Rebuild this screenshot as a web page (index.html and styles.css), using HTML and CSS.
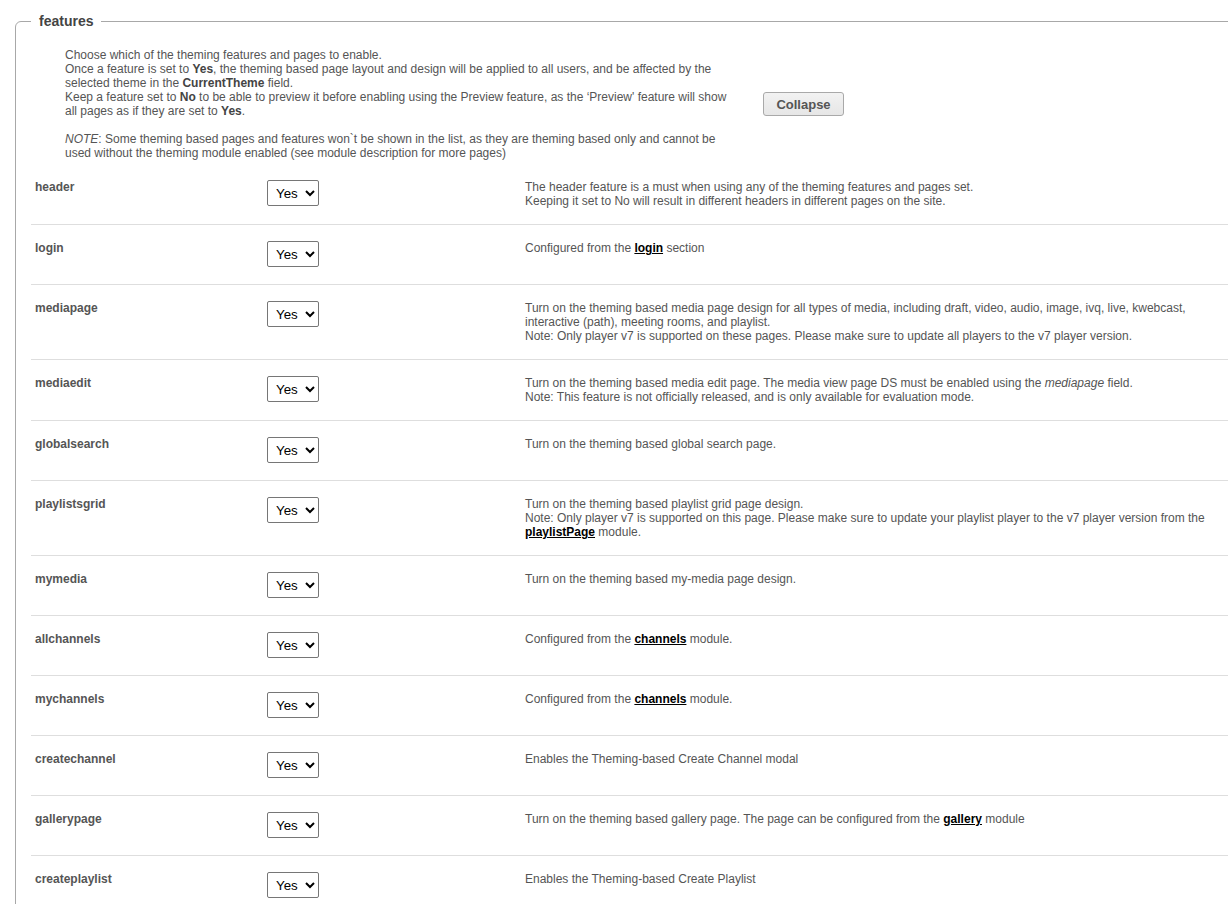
FILE: index.html
```html
<!DOCTYPE html>
<html>
<head>
<meta charset="utf-8">
<link rel="stylesheet" href="styles.css">
</head>
<body>
<div class="page">
<fieldset class="features">
  <legend class="legend">features</legend>
  <div class="intro">
    <div class="intro-text">
      Choose which of the theming features and pages to enable.<br>
      Once a feature is set to <b>Yes</b>, the theming based page layout and design will be applied to all users, and be affected by the selected theme in the <b>CurrentTheme</b> field.<br>
      Keep a feature set to <b>No</b> to be able to preview it before enabling using the Preview feature, as the ‘Preview' feature will show all pages as if they are set to <b>Yes</b>.<br>
      <br>
      <i>NOTE</i>: Some theming based pages and features won`t be shown in the list, as they are theming based only and cannot be used without the theming module enabled (see module description for more pages)
    </div>
    <button class="collapse" type="button">Collapse</button>
  </div>

  <div class="rows">
    <div class="row">
      <div class="label">header</div>
      <div class="control"><select class="sel"><option>Yes</option><option>No</option></select></div>
      <div class="desc">The header feature is a must when using any of the theming features and pages set.<br>Keeping it set to No will result in different headers in different pages on the site.</div>
    </div>
    <div class="row">
      <div class="label">login</div>
      <div class="control"><select class="sel"><option>Yes</option><option>No</option></select></div>
      <div class="desc">Configured from the <a class="lnk" href="#">login</a> section</div>
    </div>
    <div class="row">
      <div class="label">mediapage</div>
      <div class="control"><select class="sel"><option>Yes</option><option>No</option></select></div>
      <div class="desc">Turn on the theming based media page design for all types of media, including draft, video, audio, image, ivq, live, kwebcast, interactive (path), meeting rooms, and playlist.<br>Note: Only player v7 is supported on these pages. Please make sure to update all players to the v7 player version.</div>
    </div>
    <div class="row">
      <div class="label">mediaedit</div>
      <div class="control"><select class="sel"><option>Yes</option><option>No</option></select></div>
      <div class="desc">Turn on the theming based media edit page. The media view page DS must be enabled using the <i>mediapage</i> field.<br>Note: This feature is not officially released, and is only available for evaluation mode.</div>
    </div>
    <div class="row">
      <div class="label">globalsearch</div>
      <div class="control"><select class="sel"><option>Yes</option><option>No</option></select></div>
      <div class="desc">Turn on the theming based global search page.</div>
    </div>
    <div class="row">
      <div class="label">playlistsgrid</div>
      <div class="control"><select class="sel"><option>Yes</option><option>No</option></select></div>
      <div class="desc">Turn on the theming based playlist grid page design.<br>Note: Only player v7 is supported on this page. Please make sure to update your playlist player to the v7 player version from the <a class="lnk" href="#">playlistPage</a> module.</div>
    </div>
    <div class="row">
      <div class="label">mymedia</div>
      <div class="control"><select class="sel"><option>Yes</option><option>No</option></select></div>
      <div class="desc">Turn on the theming based my-media page design.</div>
    </div>
    <div class="row">
      <div class="label">allchannels</div>
      <div class="control"><select class="sel"><option>Yes</option><option>No</option></select></div>
      <div class="desc">Configured from the <a class="lnk" href="#">channels</a> module.</div>
    </div>
    <div class="row">
      <div class="label">mychannels</div>
      <div class="control"><select class="sel"><option>Yes</option><option>No</option></select></div>
      <div class="desc">Configured from the <a class="lnk" href="#">channels</a> module.</div>
    </div>
    <div class="row">
      <div class="label">createchannel</div>
      <div class="control"><select class="sel"><option>Yes</option><option>No</option></select></div>
      <div class="desc">Enables the Theming-based Create Channel modal</div>
    </div>
    <div class="row">
      <div class="label">gallerypage</div>
      <div class="control"><select class="sel"><option>Yes</option><option>No</option></select></div>
      <div class="desc">Turn on the theming based gallery page. The page can be configured from the <a class="lnk" href="#">gallery</a> module</div>
    </div>
    <div class="row">
      <div class="label">createplaylist</div>
      <div class="control"><select class="sel"><option>Yes</option><option>No</option></select></div>
      <div class="desc">Enables the Theming-based Create Playlist</div>
    </div>
    <div class="row">
      <div class="label">editplaylist</div>
      <div class="control"><select class="sel"><option>Yes</option><option>No</option></select></div>
      <div class="desc">Enables the Theming-based Edit Playlist</div>
    </div>
  </div>
</fieldset>
</div>
</body>
</html>
```

FILE: styles.css
```css
html, body {
  margin: 0;
  padding: 0;
  background: #fff;
  overflow: hidden;
}

body {
  font-family: "Liberation Sans", Arial, sans-serif;
  font-size: 12px;
  line-height: 14px;
  color: #555;
}

.page {
  padding: 13px 0 0 15px;
  width: 1228px;
}

.features {
  margin: 0;
  border: 1px solid #a8a8a8;
  border-radius: 6px 0 0 0;
  padding: 19px 0 0 15px;
  min-width: 0;
}

.legend {
  padding: 0 8px;
  font-size: 14px;
  line-height: 16px;
  font-weight: bold;
  color: #444;
}

.intro {
  display: flex;
  align-items: center;
  padding-left: 34px;
  margin-bottom: 4px;
}

.intro-text {
  width: 665px;
}

.intro-text b {
  color: #444;
}

.collapse {
  margin-left: 33px;
  width: 81px;
  height: 24px;
  padding: 0;
  font-family: "Liberation Sans", Arial, sans-serif;
  font-size: 13px;
  font-weight: bold;
  color: #555;
  background: linear-gradient(#f2f2f2, #e6e6e6);
  border: 1px solid #a9a9a9;
  border-radius: 3px;
}

.rows {
  display: flex;
  flex-direction: column;
}

.row {
  display: grid;
  grid-template-columns: 232px 258px 1fr;
  padding: 16px 0;
  border-bottom: 1px solid #dedede;
}

.row:last-child {
  border-bottom: none;
}

.label {
  padding: 0 4px;
  font-weight: bold;
  color: #555;
}

.control {
  padding: 0 4px;
}

.sel {
  display: block;
  width: 52px;
  height: 26px;
  margin: 0 0 1px;
  font-family: "Liberation Sans", Arial, sans-serif;
  font-size: 13.333px;
  color: #000;
  background: #fff;
  border: 1px solid #767676;
  border-radius: 2px;
  padding: 0 0 0 4px;
}

.desc {
  padding: 0 4px;
}

.lnk {
  color: #000;
  font-weight: bold;
  text-decoration: underline;
}
```
